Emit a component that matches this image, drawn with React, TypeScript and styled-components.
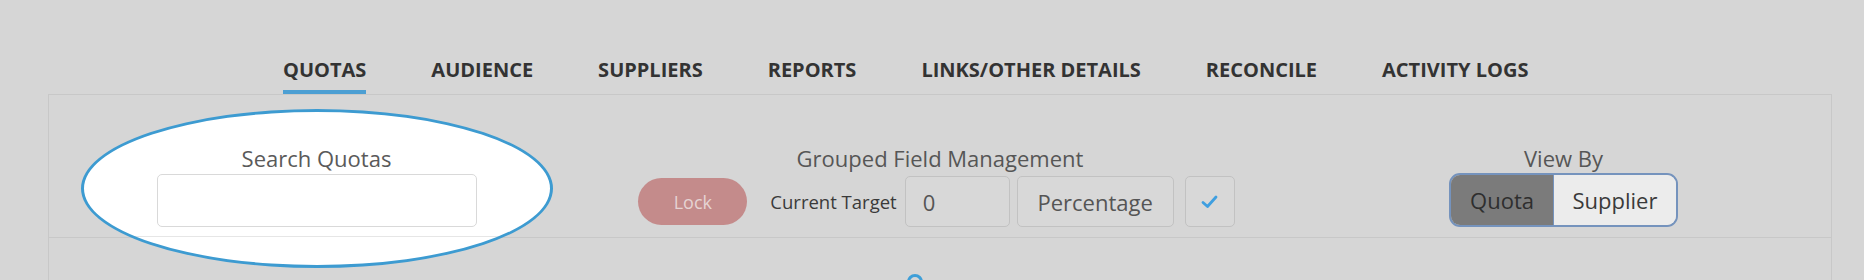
import React from 'react';
import styled, { createGlobalStyle } from 'styled-components';

const GlobalStyle = createGlobalStyle`
  html, body {
    margin: 0;
    padding: 0;
    background: #d6d6d6;
  }
  body {
    font-family: 'Open Sans', 'Liberation Sans', sans-serif;
  }
`;

const Page = styled.div`
  height: 280px;
  overflow: hidden;
  background: #d6d6d6;
`;

const Nav = styled.nav`
  height: 94px;
  display: flex;
  align-items: flex-end;
  gap: 65px;
  padding-left: 283px;
  box-sizing: border-box;
`;

const Tab = styled.div<{ active?: boolean }>`
  font-size: 20px;
  font-weight: 700;
  line-height: 26px;
  color: #333;
  padding-bottom: 7px;
  border-bottom: 4px solid ${(p) => (p.active ? '#4c9fd3' : 'transparent')};
  white-space: nowrap;
`;

const Panel = styled.div`
  margin: 0 32px 0 48px;
  border: 1px solid #c8c8c8;
  border-bottom: none;
  height: 200px;
`;

const Header = styled.div`
  position: relative;
  display: grid;
  grid-template-columns: 535px 1fr 535px;
  align-items: start;
  padding: 49px 0 9px;
  border-bottom: 1px solid #c8c8c8;
`;

// annotation ring drawn round the search box
const Highlight = styled.div`
  position: absolute;
  left: 32px;
  top: 14px;
  width: 472px;
  height: 159px;
  box-sizing: border-box;
  border: 3px solid #3d9bd1;
  border-radius: 50%;
  background: linear-gradient(
    to bottom,
    #fff 0,
    #fff 124px,
    #e6e6e6 124px,
    #e6e6e6 125px,
    #fff 125px
  );
  z-index: 0;
`;

const Group = styled.div`
  position: relative;
  z-index: 1;
  display: flex;
  flex-direction: column;
  align-items: center;
`;

const Label = styled.div<{ tone?: string }>`
  font-size: 22px;
  line-height: 28px;
  color: ${(p) => p.tone || '#565656'};
  white-space: nowrap;
`;

const SearchInput = styled.input`
  margin-top: 2px;
  width: 320px;
  height: 53px;
  box-sizing: border-box;
  border: 1px solid #d9d9d9;
  border-radius: 5px;
  background: #fff;
  outline: none;
`;

const Row = styled.div`
  margin-top: 3px;
  height: 53px;
  display: flex;
  align-items: center;
  padding-right: 7px;
`;

const LockButton = styled.button`
  width: 109px;
  height: 47px;
  border: none;
  border-radius: 24px;
  background: #c48b8b;
  color: #e6d3d3;
  font-family: inherit;
  font-size: 18px;
  padding: 0;
`;

const SmallLabel = styled.span`
  margin-left: 23px;
  margin-right: 8px;
  font-size: 18.5px;
  color: #3a3a3a;
  white-space: nowrap;
`;

const Field = styled.div<{ w: number; center?: boolean; gap?: number }>`
  width: ${(p) => p.w}px;
  height: 51px;
  box-sizing: border-box;
  margin-left: ${(p) => p.gap || 0}px;
  border: 1px solid #c2c2c2;
  border-radius: 5px;
  background: #d8d8d8;
  display: flex;
  align-items: center;
  justify-content: ${(p) => (p.center ? 'center' : 'flex-start')};
  padding-left: ${(p) => (p.center ? 0 : 17)}px;
  font-size: 22px;
  color: #555;
`;

const Toggle = styled.div`
  margin-top: 1px;
  height: 54px;
  display: flex;
  box-sizing: border-box;
  border: 2px solid #7593bd;
  border-radius: 11px;
  overflow: hidden;
`;

const ToggleOption = styled.div<{ selected?: boolean; w: number }>`
  width: ${(p) => p.w}px;
  display: flex;
  align-items: center;
  justify-content: center;
  font-size: 22px;
  background: ${(p) => (p.selected ? '#7b7b7b' : '#ececec')};
  color: ${(p) => (p.selected ? '#2e2e2e' : '#3a3a3a')};
  & + & {
    border-left: 1px solid #7593bd;
  }
`;

const Body = styled.div`
  display: flex;
  justify-content: center;
  padding-top: 36px;
`;

const Spinner = styled.div`
  width: 16px;
  height: 16px;
  box-sizing: border-box;
  border: 3px solid #3f9fd8;
  border-radius: 50%;
  margin-right: 50px;
`;

const tabs = [
  'QUOTAS',
  'AUDIENCE',
  'SUPPLIERS',
  'REPORTS',
  'LINKS/OTHER DETAILS',
  'RECONCILE',
  'ACTIVITY LOGS',
];

function CheckIcon() {
  return (
    <svg width="17" height="14" viewBox="0 0 17 14">
      <path
        d="M2 7.5 L6.5 11.5 L15 2"
        fill="none"
        stroke="#3f9fe0"
        strokeWidth="2.8"
        strokeLinecap="round"
        strokeLinejoin="round"
      />
    </svg>
  );
}

export default function App() {
  return (
    <Page>
      <GlobalStyle />
      <Nav>
        {tabs.map((t, i) => (
          <Tab key={t} active={i === 0}>
            {t}
          </Tab>
        ))}
      </Nav>
      <Panel>
        <Header>
          <Highlight />
          <Group>
            <Label tone="#5a5a5a">Search Quotas</Label>
            <SearchInput />
          </Group>
          <Group>
            <Label>Grouped Field Management</Label>
            <Row>
              <LockButton>Lock</LockButton>
              <SmallLabel>Current Target</SmallLabel>
              <Field w={105}>0</Field>
              <Field w={157} center gap={7}>
                Percentage
              </Field>
              <Field w={50} center gap={11}>
                <CheckIcon />
              </Field>
            </Row>
          </Group>
          <Group>
            <Label>View By</Label>
            <Toggle>
              <ToggleOption selected w={102}>
                Quota
              </ToggleOption>
              <ToggleOption w={122}>Supplier</ToggleOption>
            </Toggle>
          </Group>
        </Header>
        <Body>
          <Spinner />
        </Body>
      </Panel>
    </Page>
  );
}
